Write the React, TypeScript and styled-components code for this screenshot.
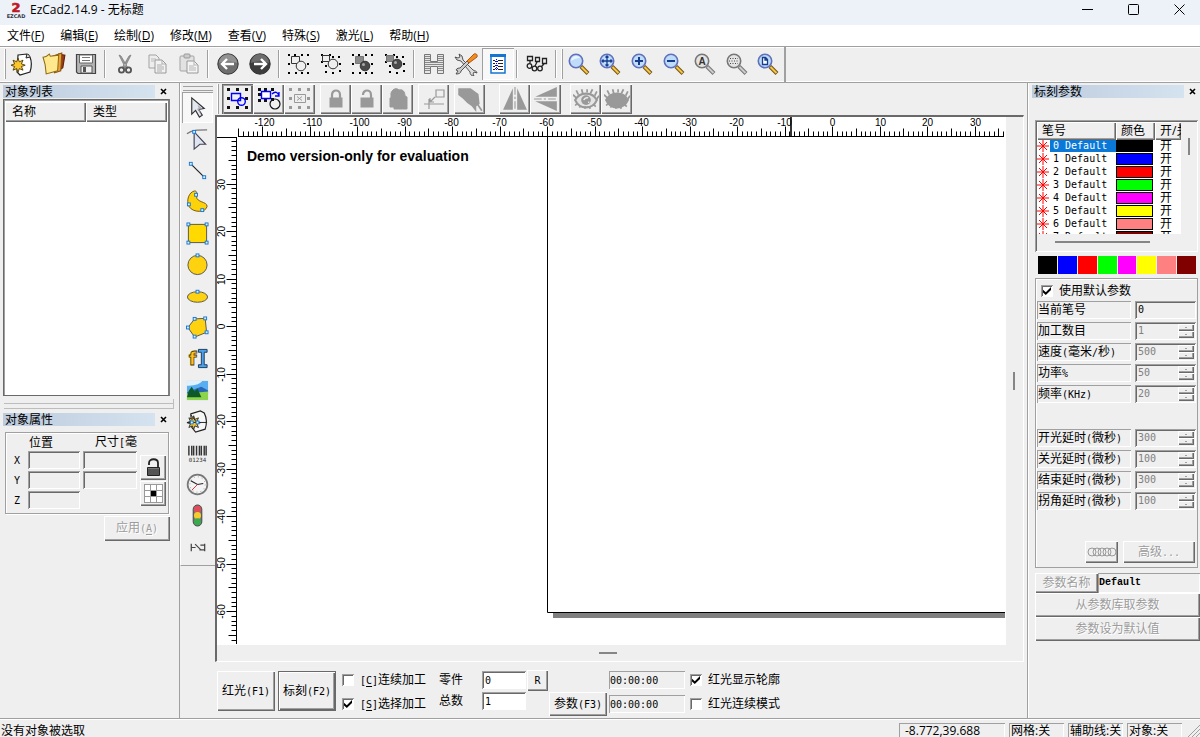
import React from "react";
import styled, { createGlobalStyle, css } from "styled-components";

const face = "#efefef";
const shade = "#a0a0a0";
const dark = "#696969";
const ui = `"Open Sans", "Noto Sans CJK SC", sans-serif`;
const song = `"DejaVu Sans Mono", "Noto Sans CJK SC", monospace`;

const raised = css`
  box-shadow: inset 1px 1px #fff, inset -1px -1px ${dark}, inset -2px -2px ${shade};
`;
const sunken = css`
  box-shadow: inset 1px 1px ${shade}, inset -1px -1px #fff;
`;
const deep = css`
  box-shadow: inset 1px 1px ${shade}, inset -1px -1px #fff, inset 2px 2px ${dark};
`;

const Global = createGlobalStyle`
  * { box-sizing: border-box; }
  body { margin: 0; background: ${face}; color: #000; font: 12px/14px ${ui}; }
  button, input { font: inherit; color: inherit; border: 0; margin: 0; padding: 0; background: none; border-radius: 0; }
  a { color: inherit; text-decoration: none; }
  svg { display: block; flex: none; }
  h1, h2 { margin: 0; font: inherit; }
  table { border-collapse: collapse; border-spacing: 0; }
  th { font-weight: normal; text-align: left; }
`;

const Window = styled.div`
  display: flex;
  flex-direction: column;
  height: 100vh;
  min-height: 720px;
  overflow: hidden;
`;

/* ---------- text ---------- */

const Half = styled.span`
  font-size: 10px;
`;
const Key = styled.u`
  text-underline-offset: 2px;
`;
const Cjk = styled.span<{ $off?: boolean }>`
  font: 12px/14px ${song};
  white-space: nowrap;
  ${(p) => p.$off && css`color: #9c9c9c; text-shadow: 1px 1px #fff;`}
`;

/* Full-width characters at 12px, half-width ones at exactly half that advance. */
function Label({ text, off }: { text: string; off?: boolean }) {
  const parts = text.split(/([\x20-\x7e]+)/).filter(Boolean);
  return (
    <Cjk $off={off}>
      {parts.map((part, i) => {
        if (!/^[\x20-\x7e]/.test(part)) return part;
        const m = part.match(/^([^&]*)&(.)(.*)$/);
        return <Half key={i}>{m ? <>{m[1]}<Key>{m[2]}</Key>{m[3]}</> : part}</Half>;
      })}
    </Cjk>
  );
}

/* ---------- title and menu ---------- */

const TitleBar = styled.header`
  display: flex;
  align-items: center;
  height: 25px;
  flex: none;
  padding: 0 0 6px 6px;
  background: #edf2f9;
`;
const Title = styled.h1`
  flex: 1;
  padding-left: 4px;
`;
const Caption = styled.button`
  display: flex;
  align-items: center;
  justify-content: center;
  width: 46px;
  height: 18px;
`;
const CaptionGroup = styled.div`
  display: flex;
  margin-right: -2px;
`;
const MenuBar = styled.nav`
  display: flex;
  gap: 16px;
  height: 21px;
  flex: none;
  padding: 4px 7px 0;
  background: #fff;
`;
const MenuItem = styled.a`
  white-space: nowrap;
`;

/* ---------- tool bars ---------- */

const Rebar = styled.div`
  display: flex;
  height: 37px;
  flex: none;
  padding-left: 4px;
  border-top: 1px solid ${shade};
  border-bottom: 1px solid ${shade};
  box-shadow: inset 0 1px #fff, inset 0 -1px #fff;
`;
const Band = styled.div`
  display: flex;
  align-items: center;
  padding: 0 0 2px;
`;
const ZoomBand = styled(Band)`
  width: 226px;
  padding-left: 1px;
  border-right: 2px solid ${shade};
`;
const Grip = styled.i`
  width: 2px;
  height: 30px;
  border-right: 1px solid ${shade};
  border-left: 1px solid #fff;
`;
const Divider = styled.i`
  width: 2px;
  height: 28px;
  margin: 0 3px 0 2px;
  border-left: 1px solid ${shade};
  border-right: 1px solid #fff;
`;
const Tool = styled.button<{ $on?: boolean }>`
  display: flex;
  align-items: center;
  justify-content: center;
  width: 32px;
  height: 32px;
  ${(p) => p.$on && css`background: #f8f8f8; ${sunken}`}
`;
const ZoomTool = styled(Tool)`
  flex: 1;
`;

const Body = styled.div`
  display: flex;
  flex: 1;
  min-height: 0;
`;

/* ---------- docked panels ---------- */

const LeftDock = styled.aside`
  display: flex;
  flex-direction: column;
  width: 180px;
  flex: none;
  padding-top: 1px;
  border-right: 1px solid ${shade};
`;
const PanelHead = styled.div`
  display: flex;
  align-items: center;
  height: 14px;
  margin: 0 0 0 3px;
`;
const PanelTitle = styled.h2`
  flex: 1;
  height: 13px;
  padding-left: 2px;
  line-height: 13px;
  background: linear-gradient(90deg, #bccbdd, #d5e2ef);
`;
const Close = styled.button`
  width: 16px;
  height: 14px;
  display: flex;
  align-items: center;
  justify-content: center;
`;
const Spacer = styled.i`
  width: 8px;
`;
const ListPane = styled.div`
  height: 297px;
  margin: 1px 9px 0 3px;
  padding: 2px 1px 2px;
  background: #fff;
  border: 1px solid ${dark};
  border-right: 2px solid #808080;
  box-shadow: inset 1px 1px ${shade};
`;
const HeadTable = styled.table`
  width: 100%;
  table-layout: fixed;
  background: ${face};
`;
const HeadCell = styled.th`
  height: 20px;
  padding: 0 0 0 7px;
  ${raised}
`;
const Splitter = styled.div`
  height: 10px;
  margin: 3px 5px 3px 4px;
  border: 1px solid #bdbdbd;
  border-width: 0 1px 1px 0;
  background: linear-gradient(#bdbdbd, #bdbdbd) 0 4px / 100% 1px no-repeat;
`;
const Group = styled.fieldset`
  display: grid;
  grid-template-columns: 19px 52px 52px 28px;
  column-gap: 3px;
  height: 82px;
  margin: 6px 10px 0 5px;
  padding: 3px 0 0;
  border: 1px solid ${shade};
  box-shadow: inset 1px 1px #fff, 1px 1px #fff;
`;
const AxisColumn = styled.div`
  display: grid;
  grid-template-rows: 13px 18px 18px 18px;
  row-gap: 2px;
  align-content: start;
  justify-items: center;
  align-items: center;
  padding-left: 3px;
`;
const FieldColumn = styled(AxisColumn)`
  justify-items: stretch;
  padding-left: 0;
`;
const FieldHead = styled.span<{ $pad: number }>`
  padding-left: ${(p) => p.$pad}px;
  white-space: nowrap;
`;
const ButtonColumn = styled.div`
  display: grid;
  grid-template-rows: 25px 25px;
  row-gap: 1px;
  padding: 19px 0 0 2px;
`;
const PosInput = styled.input`
  width: 100%;
  height: 18px;
  padding: 0 4px;
  ${deep}
`;
const Face = styled.button`
  display: flex;
  align-items: center;
  justify-content: center;
  background: ${face};
  white-space: nowrap;
  ${raised}
`;
const Apply = styled(Face)`
  width: 66px;
  height: 25px;
  margin: 2px 9px 0 auto;
`;

/* ---------- drawing tools ---------- */

const DrawDock = styled.div`
  display: flex;
  flex-direction: column;
  width: 35px;
  height: 483px;
  flex: none;
  padding: 3px 2px 2px 1px;
  border-left: 1px solid #fff;
  border-bottom: 1px solid ${shade};
`;
const HGrip = styled.i`
  height: 5px;
  border-top: 1px solid ${shade};
  border-bottom: 1px solid ${shade};
  margin: 0 0 1px 1px;
  flex: none;
`;
const DrawTool = styled(Tool)`
  width: 31px;
  height: auto;
  flex: 1;
`;

/* ---------- centre ---------- */

const Center = styled.main`
  display: flex;
  flex-direction: column;
  flex: 1;
  min-width: 0;
`;
const EditBar = styled.div`
  display: flex;
  align-items: center;
  height: 32px;
  flex: none;
  padding-left: 2px;
`;
const EditGroup = styled.div<{ $gap: number }>`
  display: flex;
  margin-left: ${(p) => p.$gap}px;
`;
const EditTool = styled(Face)<{ $on?: boolean }>`
  width: 31px;
  height: 30px;
  ${(p) => p.$on && css`box-shadow: inset 1px 1px ${dark}, inset 2px 2px ${shade}, inset -2px -2px ${dark};`}
`;
const Frame = styled.div`
  display: grid;
  grid-template-columns: 1fr 17px;
  grid-template-rows: 1fr 16px;
  flex: 1;
  min-height: 0;
  margin-right: 3px;
  border: 2px solid ${dark};
  border-right: 1px solid #fff;
  border-bottom: 1px solid #fff;
`;
const Sheet = styled.div`
  overflow: hidden;
  min-width: 0;
  min-height: 0;
  background: #fff;
`;
const VScroll = styled.div`
  display: flex;
  align-items: center;
  justify-content: center;
  padding-right: 2px;
  &::after { content: ""; width: 2px; height: 18px; background: #868686; }
`;
const HScroll = styled.div`
  display: flex;
  align-items: center;
  justify-content: center;
  padding-right: 8px;
  &::after { content: ""; width: 18px; height: 2px; background: #868686; }
`;

const MarkBar = styled.form`
  display: flex;
  height: 56px;
  flex: none;
  padding: 8px 0 0 2px;
`;
const BigButton = styled(Face)<{ $primary?: boolean }>`
  width: 58px;
  height: 40px;
  margin: 1px 3px 0 0;
  ${(p) => p.$primary && css`border: 1px solid ${dark};`}
`;
const Rows = styled.div<{ $w: number }>`
  display: grid;
  grid-template-rows: 20px 20px;
  row-gap: 4px;
  align-content: start;
  align-items: center;
  width: ${(p) => p.$w}px;
`;
const Inputs = styled(Rows)`
  row-gap: 1px;
`;
const CheckRows = styled(Rows)<{ $gap: number }>`
  margin-left: ${(p) => p.$gap}px;
`;
const Check = styled.label`
  display: flex;
  align-items: center;
  gap: 6px;
`;
const Box = styled.input`
  appearance: none;
  width: 12px;
  height: 12px;
  background: #fff;
  ${deep}
  &:checked::before {
    content: "";
    display: block;
    width: 8px;
    height: 8px;
    margin: 2px;
    background: #000;
    clip-path: polygon(0 35%, 35% 65%, 100% 0, 100% 38%, 35% 100%, 0 70%);
  }
`;
const TextBox = styled.input`
  width: 100%;
  height: 18px;
  padding: 0 3px;
  background: #fff;
  font: 10px/14px ${song};
  ${deep}
`;
const Reset = styled(Face)`
  width: 21px;
  height: 21px;
  margin-left: 1px;
`;
const ParamButton = styled(Face)`
  width: 58px;
  height: 24px;
  margin: 22px 2px 0 1px;
`;
const Clock = styled.output`
  height: 18px;
  padding: 2px 1px;
  ${sunken}
`;

/* ---------- parameter dock ---------- */

const RightDock = styled.aside`
  display: flex;
  flex-direction: column;
  width: 173px;
  flex: none;
  padding: 1px 0 0 7px;
  border-left: 1px solid ${shade};
  box-shadow: inset 1px 0 #fff;
`;
const RightHead = styled(PanelHead)`
  margin: 0 0 22px -3px;
`;
const PenFrame = styled.div`
  height: 132px;
  flex: none;
  margin-right: 2px;
  padding: 2px 0 0 2px;
  ${deep}
`;
const PenRow = styled.div`
  display: flex;
  gap: 7px;
`;
const PenClip = styled.div`
  width: 144px;
  height: 112px;
  overflow: hidden;
  background: #fff;
`;
const PenTable = styled.table`
  width: 144px;
  table-layout: fixed;
`;
const PenHead = styled.th`
  height: 18px;
  padding: 0 0 0 5px;
  overflow: hidden;
  background: ${face};
  white-space: nowrap;
  ${raised}
`;
const PenCell = styled.td`
  height: 13px;
  padding: 0 0 1px;
  line-height: 12px;
  overflow: hidden;
  white-space: nowrap;
  vertical-align: top;
`;
const OnCell = styled(PenCell)`
  padding-left: 5px;
`;
const PenName = styled.span<{ $sel?: boolean }>`
  display: block;
  height: 12px;
  padding-left: 3px;
  font: 10px/12px ${song};
  ${(p) => p.$sel && css`background: #0a78d7; color: #fff;`}
`;
const PenFlex = styled.div`
  display: grid;
  grid-template-columns: 13px 1fr;
  align-items: center;
  height: 12px;
`;
const PenColor = styled.div<{ $c: string }>`
  width: 37px;
  height: 12px;
  border: 1px solid #000;
  background: ${(p) => p.$c};
`;
const PenV = styled.i`
  width: 2px;
  height: 17px;
  margin-top: 16px;
  background: #868686;
`;
const PenH = styled.i`
  display: block;
  width: 95px;
  height: 2px;
  margin: 7px 0 0 18px;
  background: #868686;
`;
const Palette = styled.div`
  display: grid;
  grid-template-columns: repeat(8, 1fr);
  gap: 1px;
  margin: 4px 4px 4px 3px;
`;
const Swatch = styled.button<{ $c: string }>`
  height: 18px;
  background: ${(p) => p.$c};
`;
const Params = styled.fieldset`
  display: flex;
  flex-direction: column;
  min-width: 0;
  height: 290px;
  flex: none;
  margin: 0 2px 0 0;
  padding: 5px 1px 0;
  border: 1px solid ${shade};
  box-shadow: inset 1px 1px #fff;
`;
const ParamCheck = styled(Check)`
  padding-left: 4px;
  margin-bottom: 3px;
`;
const Param = styled.label<{ $gap?: boolean }>`
  display: flex;
  justify-content: space-between;
  height: 18px;
  margin: ${(p) => (p.$gap ? 23 : 0)}px 0 3px;
`;
const ParamName = styled.span`
  width: 94px;
  padding: 2px 1px;
  ${sunken}
`;
const ParamField = styled.span<{ $off?: boolean }>`
  display: flex;
  width: 61px;
  height: 18px;
  padding: 2px;
  color: ${(p) => (p.$off ? "#808080" : "#000")};
  ${deep}
`;
const ParamInput = styled.input`
  flex: 1;
  min-width: 0;
  padding-left: 1px;
  font: 10px/14px ${song};
`;
const Spin = styled.span`
  display: grid;
  grid-template-rows: 7px 7px;
  width: 16px;
`;
const Nub = styled.i`
  width: 2px;
  height: 1px;
  background: ${shade};
`;
const Advanced = styled.div`
  display: flex;
  justify-content: flex-end;
  gap: 5px;
  margin-top: 28px;
  padding-right: 1px;
`;
const AdvButton = styled(Face)<{ $w: number }>`
  width: ${(p) => p.$w}px;
  height: 22px;
`;
const NameRow = styled.div`
  display: flex;
  height: 20px;
  margin-top: 5px;
`;
const NameButton = styled(Face)`
  width: 63px;
`;
const NameBox = styled.output`
  flex: 1;
  padding: 3px 1px;
  font: bold 10px/14px "Liberation Mono", monospace;
  ${sunken}
`;
const WideButton = styled(Face)`
  height: 24px;
  flex: none;
`;

/* ---------- status bar ---------- */

const StatusBar = styled.footer`
  display: flex;
  height: 19px;
  flex: none;
  gap: 4px;
  padding: 4px 0 0 1px;
  border-top: 1px solid ${shade};
  box-shadow: inset 0 1px #fff;
  overflow: hidden;
`;
const Message = styled.span`
  flex: 1;
  padding-top: 1px;
`;
const Pane = styled.span<{ $w: number }>`
  width: ${(p) => p.$w}px;
  height: 18px;
  padding: 1px 0 0 2px;
  white-space: nowrap;
  ${sunken}
`;
const Coord = styled(Pane)`
  padding-left: 6px;
`;

/* ---------- icons ---------- */

const Svg = ({ s = 24, children }: { s?: number; children: React.ReactNode }) => (
  <svg width={s} height={s} viewBox="0 0 24 24" fill="none" aria-hidden="true">{children}</svg>
);

const star = "M8 6l1.3 3.8 3.7-1.6-1.6 3.7 3.8 1.3-3.8 1.3 1.6 3.7-3.7-1.6L8 20.4l-1.3-3.8L3 18.2l1.6-3.7L1 13.2l3.6-1.3L3 8.2l3.7 1.6z";

const dots = (pts: number[][], c = "#000") =>
  pts.map(([x, y]) => <rect key={`${x}-${y}`} x={x} y={y} width="2" height="2" fill={c} />);
const ring = [[1, 2], [7, 2], [14, 2], [20, 2], [1, 11], [20, 11], [1, 20], [8, 20], [14, 20], [20, 20]];

const NewIcon = () => (
  <Svg>
    <path d="M8 3l9-1c1 0 2 1 3 3 2 5 2 9 0 15l-10 3-3-3z" fill="#fff" stroke="#222" strokeWidth="1.2" />
    <path d="M17 2l-1 4 4-1" fill="#ddd" stroke="#222" />
    <path d={star} fill="#f9c62b" stroke="#513a05" strokeWidth=".9" />
  </Svg>
);
const OpenIcon = () => (
  <Svg s={25}>
    <path d="M16 3l6 1-2 12-4 3z" fill="#9d3a16" stroke="#5d2208" />
    <path d="M10 5l9-3-1 17-6 2z" fill="#f0a33b" stroke="#8a5510" />
    <path d="M1 6c2 0 4-1 6-3l1 2 8-1-1 15-11 3-1-9z" fill="#ffe88d" stroke="#8f6a12" />
  </Svg>
);
const SaveIcon = () => (
  <Svg>
    <path d="M2.500 2.500h19v19H4l-1.500-1.500z" fill="#b4b4b4" stroke="#444" strokeWidth="1.2" />
    <path d="M5.500 3h13v8h-13z" fill="#fff" stroke="#666" />
    <path d="M8 5.500h8M8 8.500h8" stroke="#777" />
    <path d="M7 14h11v7H7z" fill="#f1f1f1" stroke="#555" />
    <path d="M9 15h3v5H9z" fill="#555" />
  </Svg>
);
const CutIcon = () => (
  <Svg>
    <path d="M6 3l2 1 7 12-2 1zM18 3l-2 1-7 12 2 1z" fill="#999" stroke="#777" strokeWidth=".7" />
    <circle cx="8.500" cy="18" r="2.600" stroke="#555" strokeWidth="1.800" />
    <circle cx="15.500" cy="18" r="2.600" stroke="#555" strokeWidth="1.800" />
  </Svg>
);
const CopyIcon = () => (
  <Svg>
    <path d="M4 3h7l3 3v10H4z" fill="#ededed" stroke="#a3a3a3" />
    <path d="M6 7h5M6 9h3" stroke="#bbb" />
    <path d="M10 8h7l4 4v9H10z" fill="#f2f2f2" stroke="#999" />
    <path d="M17 8v4h4M12 13h5M12 15h7M12 17h7M12 19h5" stroke="#adadad" />
  </Svg>
);
const PasteIcon = () => (
  <Svg>
    <rect x="3" y="4" width="14" height="15" rx="1" fill="#e2e2e2" stroke="#a3a3a3" />
    <rect x="7" y="2" width="6" height="4" rx="1" fill="#ccc" stroke="#999" />
    <path d="M10 9h7l4 4v8H10z" fill="#f4f4f4" stroke="#999" />
    <path d="M17 9v4h4M12 14h5M12 16h7M12 18h7" stroke="#b5b5b5" />
  </Svg>
);
const ArrowDisc = ({ back }: { back?: boolean }) => (
  <Svg>
    <circle cx="12" cy="12" r="10.200" fill={back ? "#6e6e6e" : "#3d3d3d"} stroke="#333" />
    <path d="M3 11a9 9 0 0118 0c-5-2-13-2-18 0z" fill="#fff" opacity=".25" />
    <path d={back ? "M18 12H7M11 7l-5 5 5 5" : "M6 12h11M13 7l5 5-5 5"} stroke="#fff" strokeWidth="2.400" />
  </Svg>
);
const GroupIcon = ({ fill, tight }: { fill?: boolean; tight?: boolean }) => (
  <Svg>
    {tight
      ? dots([[2, 2], [10, 2], [2, 9], [13, 4], [19, 4], [20, 11], [6, 13], [20, 18], [6, 19], [13, 20]])
      : dots(ring)}
    <path d={tight ? "M3.500 3.500h7v6h-7z" : "M4.500 4.500h8v7h-8z"} fill={fill ? "#8a8a8a" : "#efefef"} stroke={fill ? "#777" : "#333"} />
    <circle cx="14" cy={tight ? 12 : 14} r="4.800" fill={fill ? "#4a4a4a" : "#efefef"} stroke="#333" />
    {fill && <circle cx="12.500" cy={tight ? 10.5 : 12.5} r="1.500" fill="#aaa" />}
  </Svg>
);
const HatchIcon = () => (
  <Svg>
    <path d="M2.500 2.500h6v7h7v-7h6v19h-6v-7h-7v7h-6z" fill="#e6e6e6" stroke="#777" />
    <path d="M3 4.500h5M3 6.500h5M3 8.500h5M3 10.500h18M3 12.500h18M3 14.500h5M3 16.500h5M3 18.500h5M16 4.500h5M16 6.500h5M16 8.500h5M16 14.500h5M16 16.500h5M16 18.500h5" stroke="#888" />
  </Svg>
);
const ToolsIcon = () => (
  <Svg>
    <path d="M5 2l3 2 1 4 10 10c2 1 4 1 4 3l-3-1-1 2 1 2c-3 0-4-2-4-4L7 9 3 8 1 5l3 1 2-1z" fill="#ddd" stroke="#444" strokeWidth=".9" />
    <path d="M13 9l2 2-8 8c0 2-2 3-5 3l2-3-2-1c1-2 3-2 4-2z" fill="#ccc" stroke="#444" strokeWidth=".9" />
    <path d="M13 9l7-7c2-1 4 1 3 3l-8 6z" fill="#f58a1f" stroke="#a34e06" strokeWidth=".9" />
  </Svg>
);
const ListIcon = () => (
  <Svg>
    <rect x="5" y="3" width="14" height="18" fill="#fff" stroke="#1673cf" strokeWidth="1.500" />
    <path d="M4 2h16v3H4z" fill="#1673cf" />
    <path d="M7 8.500h2M7 11.500h2M7 14.500h2M7 17.500h2M12 8.500h5M12 11.500h5M12 14.500h5M12 17.500h5" stroke="#222" />
    <path d="M10.500 7v12M9 9.500h3M9 13.500h3M9 16.500h3" stroke="#00f" strokeDasharray="1 1" />
  </Svg>
);
const ChainIcon = () => (
  <Svg>
    <g stroke="#222" strokeWidth="1.300">
      <path d="M2.500 4.500h5v4h-5zM10.500 5.500h4v4h-4zM17.500 6.500h4v5h-4zM5 9v2M12 10l-2 4M19 12l-3 3" />
      <circle cx="4.500" cy="14" r="2.300" /><circle cx="9.500" cy="16.500" r="2.300" /><circle cx="15" cy="16.500" r="2.300" />
    </g>
  </Svg>
);
const Lens = ({ kind }: { kind: string }) => {
  const gray = kind === "A" || kind === "dots";
  const ink = gray ? "#444" : "#163c8c";
  return (
    <Svg>
      <path d="M14 14.500l7 7" stroke={gray ? "#777" : "#77531a"} strokeWidth="4" />
      <path d="M14.500 15l6 6" stroke={gray ? "#ccc" : "#f5c842"} strokeWidth="2" />
      <circle cx="9" cy="9" r="6.700" fill={gray ? "#e4e4e4" : "#bfdcfb"} stroke={gray ? "#777" : "#5f70bd"} strokeWidth="1.600" />
      {kind === "" && <path d="M4 9a5 5 0 015-5c3 0 4 1 4 2-3 0-6 1-9 3z" fill="#fff" opacity=".7" />}
      {kind === "+" && <path d="M9 5v8M5 9h8" stroke={ink} strokeWidth="2" />}
      {kind === "-" && <path d="M5 9h8" stroke={ink} strokeWidth="2" />}
      {kind === "move" && <path d="M9 4v10M4 9h10M7.500 5.500L9 4l1.500 1.500M7.500 12.500L9 14l1.500-1.500M5.500 7.500L4 9l1.500 1.500M12.500 7.500L14 9l-1.500 1.500" stroke={ink} strokeWidth="1.300" />}
      {kind === "dots" && <path d="M5 6.500h8M4 9h10M5 11.500h8" stroke="#444" strokeDasharray="1 1.500" />}
      {kind === "page" && <path d="M6.500 5.500h3l2 2v5h-5zM9 5.500v2.500h2.500" fill="#fff" stroke={ink} strokeWidth="1.300" />}
      {kind === "A" && <text x="9" y="12.500" textAnchor="middle" fontSize="10" fontWeight="bold" fontFamily="Liberation Sans" fill="#333">A</text>}
    </Svg>
  );
};

const pins = (pts: number[][], c: string) =>
  pts.map(([x, y]) => <rect key={`${x}-${y}`} x={x - 1} y={y - 1} width="3" height="3" fill={c} />);
const nine = [[2, 2], [11, 2], [20, 2], [2, 11], [20, 11], [2, 20], [11, 20], [20, 20]];
const SelectIcon = () => (
  <Svg>
    {pins(nine, "#111")}
    <path d="M5.500 6.500h9v7h-9z" stroke="#00f" strokeWidth="1.400" /><circle cx="15.500" cy="14.500" r="3.800" stroke="#00f" strokeWidth="1.400" />
  </Svg>
);
const RotateIcon = () => (
  <Svg>
    {pins([[2, 2], [8, 2], [15, 2], [2, 7], [2, 13], [8, 13], [15, 12]], "#111")}
    <path d="M4.500 4.500h9v7h-9z" fill="#fff" stroke="#00f" strokeWidth="1.400" />
    <circle cx="18" cy="17" r="5" stroke="#111" strokeWidth="1.200" />
    <path d="M15 7c3-3 6-2 7 2M22 5v4h-4" stroke="#00f" strokeWidth="1.300" />
  </Svg>
);
const ArrayIcon = () => (
  <Svg>
    {pins(nine, "#999")}
    <path d="M6.500 7.500h11v8h-11zM9 9.500l5 4M14 9.500l-5 4" stroke="#999" />
  </Svg>
);
const LockIcon = ({ kind }: { kind: number }) => (
  <Svg>
    {kind < 2 ? (
      <>
        <rect x="5.500" y="10.500" width="13" height="10" fill="#999" />
        <path d={kind ? "M8 8c0-6 8-6 8 0v3" : "M8 11V8c0-6 8-6 8 0v3"} stroke="#999" strokeWidth="2.200" />
      </>
    ) : (
      <path d="M4 11h1V6c2-5 6-5 8-3 4-1 6 2 6 6l2 1v12H8v-2H4z" fill="#999" stroke="#999" />
    )}
  </Svg>
);
const OriginIcon = () => (
  <Svg>
    <path d="M2 17h20M7 12v10M14 3h8v7h-8zM13 10l-5 5M8 11v4h4" stroke="#999" strokeWidth="1.200" />
  </Svg>
);
const HandIcon = () => (
  <Svg s={27}>
    <path d="M2 2h11l7 5 1 9-3 2v5l-4-5-4-3-4-4-4-3z" fill="#999" /><path d="M17 13l6 9" stroke="#999" strokeWidth="1.500" />
  </Svg>
);
const MirrorIcon = ({ v }: { v?: boolean }) => (
  <Svg s={26}>
    <g transform={v ? "rotate(-90 12 12)" : undefined}>
      <path d="M10 2v20H1zM14 2v20h9z" fill="#999" /><path d="M12 1v22" stroke="#999" strokeDasharray="7 2 2 2" />
    </g>
  </Svg>
);
const EyeIcon = ({ shut }: { shut?: boolean }) => (
  <Svg s={26}>
    <path d="M2 13c4-8 16-8 20 0-4 9-16 9-20 0z" fill={shut ? "#999" : "#e4e4e4"} stroke="#999" strokeWidth="2" />
    <path d="M3 11L0 8M5 8L3 4M9 7L8 3M13 6V3M16 7l2-4M20 9l2-4M22 12l2-3M4 16l-2 2M7 18l-1 2M11 19v2M15 19l1 2M19 17l2 2" stroke="#999" strokeWidth="1.600" />
    {!shut && <><circle cx="12" cy="13" r="4.500" fill="#999" /><path d="M10 13a3 3 0 014-2M14 15h1" stroke="#eee" strokeWidth="1.300" /></>}
  </Svg>
);

const node = (x: number, y: number) => <rect key={`${x},${y}`} x={x - 1.5} y={y - 1.5} width="3" height="3" fill="#dff0ff" stroke="#1878d0" />;

const drawIcons: [string, React.ReactNode][] = [
  ["选择", <><path d="M6 2l13 11-6 1 4 6-3 2-4-7-4 4z" fill="#e4e8ef" stroke="#333" strokeWidth="1.200" /><path d="M12 9l5 4-5 0 4 7" fill="#aab" /></>],
  ["节点", <><path d="M1 6c5-4 12-4 21-4" stroke="#777" strokeWidth="1.300" /><path d="M8.500 4l12 13-6 0-6 5z" fill="#dfe5f2" stroke="#445" strokeWidth="1.200" />{node(8.5, 4)}</>],
  ["直线", <><path d="M5 5l14 14" stroke="#222" strokeWidth="1.200" />{node(5, 5)}{node(19, 19)}</>],
  ["曲线", <><path d="M9 1C3 2 0 11 3 17c4 7 18 7 19 0 0-5-11-4-11-10 0-3 1-6-2-6z" fill="#fcd20a" stroke="#7a5510" />{node(10.5, 5)}{node(3, 15)}{node(17, 21)}</>],
  ["矩形", <><path d="M2.500 2.500h19v19h-19z" fill="#ffd900" stroke="#555" />{[[2.5, 2.5], [21.5, 2.5], [2.5, 21.5], [21.5, 21.5]].map(([x, y]) => node(x, y))}</>],
  ["圆", <><circle cx="12" cy="12.500" r="10" fill="#ffd20f" stroke="#555" />{node(12, 2.5)}</>],
  ["椭圆", <><ellipse cx="12" cy="12.500" rx="10.500" ry="5.500" fill="#ffd20f" stroke="#555" />{node(12, 7)}</>],
  ["多边形", <><path d="M9 3l11-.5 1.500 14.500L9 22 2 12z" fill="#ffd20f" stroke="#555" />{[[9, 3], [20, 2.5], [21.5, 17], [9, 21.5], [2, 12]].map(([x, y]) => node(x, y))}</>],
  ["文字", <><text x="7" y="19" textAnchor="middle" fontSize="19" fontWeight="bold" fontFamily="DejaVu Sans" fill="#fcc419" stroke="#4d3a0a" strokeWidth=".8">f</text><path d="M13 2.500h9v3h-3v13h3v3h-9v-3h3v-13h-3z" fill="#4aa3ea" stroke="#1b3a5c" /></>],
  ["位图", <><path d="M1 2h22v20H1z" fill="#58aef0" /><path d="M1 2h16c-3 4-10 5-16 5z" fill="#dff1ff" /><path d="M1 14l10-4 5-2 7 4v4H1z" fill="#2765b5" /><path d="M1 15l22-2v9H1z" fill="#8cd44a" /><path d="M1 19l2-7 3-4 3 5 3-3 4 9z" fill="#0d5a28" /></>],
  ["矢量文件", <><path d="M5 4l10-3 4 2c3 6 3 11 1 17l-10 3-4-5z" fill="#f6f6f6" stroke="#222" strokeWidth="1.200" /><path d={star} fill="#f9c62b" stroke="#333" /><path d="M1 13h21M5 5l7 9" stroke="#222" />{node(6, 13)}{node(12, 13)}</>],
  ["条码", <><path d="M3 4v10M6 4v10M8 4v10M11 4v10M14 4v10M16 4v10M19 4v10M21 4v10" stroke="#333" strokeWidth="1.500" /><text x="12" y="21" textAnchor="middle" fontSize="6" fontFamily="DejaVu Sans Mono" fill="#333">01234</text></>],
  ["延时", <><circle cx="12" cy="12" r="10.300" fill="#f4f4f4" stroke="#777" strokeWidth="1.800" /><circle cx="12" cy="12" r="8" stroke="#999" strokeDasharray="1 3.200" /><path d="M5 8l7 4 6-1" stroke="#222" strokeWidth="1.200" /><path d="M12 12l-6 6" stroke="#d33" /></>],
  ["输入输出", <><rect x="7.500" y="1" width="9" height="22" rx="4.500" fill="#777" stroke="#444" /><circle cx="12" cy="5.500" r="3.700" fill="#e14b5a" /><circle cx="12" cy="12" r="3.700" fill="#f7cb2d" /><circle cx="12" cy="18.500" r="3.700" fill="#37ab4d" /></>],
  ["距离", <path d="M5.500 8v8M19.500 8v8M5 12h5M9.500 8.500l6 6M14 14.500h5M15 9.500h4" stroke="#444" strokeWidth="1.300" />],
];

/* ---------- drawing sheet with rulers ---------- */

const UNIT = 4.75;
const range = (a: number, b: number) => Array.from({ length: b - a + 1 }, (_, i) => a + i);
const tick = (u: number) => (u % 10 === 0 ? 10 : u % 5 === 0 ? 8 : 5);
const nudge = (n: number) => (n <= -10 ? 2 : n < 0 ? -1 : 0);

function Drawing() {
  const px = (u: number) => Math.round(615 + u * UNIT) + 0.5;
  const py = (u: number) => Math.round(209 - u * UNIT) + 0.5;
  return (
    <svg width="788" height="528" viewBox="0 0 788 528" fontFamily="Liberation Sans" fontSize="10">
      <g stroke="#000">
        {range(-125, 36).map((u) => <path key={u} d={`M${px(u)} 19.500v${-tick(u)}`} />)}
        {range(-66, 39).map((u) => <path key={u} d={`M19.500 ${py(u)}h${-tick(u)}`} />)}
        <path d="M21 19.500H787M19.500 20V527" />
        <path d="M0 20.500h19" />
        <path d="M574 0v19" strokeWidth="2" stroke="#333" />
        <path d="M330.500 20V495.500H788" fill="none" />
      </g>
      <path d="M336 496h452v5H336z" fill="#808080" />
      <g textAnchor="middle">
        {range(-12, 3).map((n) => <text key={n} x={px(n * 10) + nudge(n)} y="9">{n * 10}</text>)}
        {range(-6, 3).map((n) => (
          <text key={n} transform={`translate(8 ${py(n * 10)}) rotate(-90)`}>{n * 10}</text>
        ))}
      </g>
      <text x="30" y="44" fontSize="14" fontWeight="bold">Demo version-only for evaluation</text>
    </svg>
  );
}

/* ---------- data ---------- */

const menus = [["文件", "F"], ["编辑", "E"], ["绘制", "D"], ["修改", "M"], ["查看", "V"], ["特殊", "S"], ["激光", "L"], ["帮助", "H"]];
const colors = ["#000", "#00f", "#f00", "#0f0", "#f0f", "#ff0", "#ff8080", "#800000"];
const params: { name: string; value: string; gap?: boolean }[] = [
  { name: "当前笔号", value: "0" },
  { name: "加工数目", value: "1" },
  { name: "速度(毫米/秒)", value: "500" },
  { name: "功率%", value: "50" },
  { name: "频率(KHz)", value: "20" },
  { name: "开光延时(微秒)", value: "300", gap: true },
  { name: "关光延时(微秒)", value: "100" },
  { name: "结束延时(微秒)", value: "300" },
  { name: "拐角延时(微秒)", value: "100" },
];

const CloseX = () => <svg width="7" height="7" viewBox="0 0 7 7"><path d="M1 1l5 5M6 1L1 6" stroke="#000" strokeWidth="1.600" /></svg>;
const Burst = () => (
  <svg width="12" height="12" viewBox="0 0 12 12"><path d="M6 0v12M0 6h12M2 2l8 8M10 2l-8 8" stroke="#f00" /></svg>
);

function Toolbars() {
  return (
    <Rebar>
      <Band>
        <Grip />
        <Tool aria-label="新建"><NewIcon /></Tool>
        <Tool aria-label="打开"><OpenIcon /></Tool>
        <Tool aria-label="保存"><SaveIcon /></Tool>
        <Divider />
        <Tool aria-label="剪切"><CutIcon /></Tool>
        <Tool aria-label="复制"><CopyIcon /></Tool>
        <Tool aria-label="粘贴"><PasteIcon /></Tool>
        <Divider />
        <Tool aria-label="撤消"><ArrowDisc back /></Tool>
        <Tool aria-label="恢复"><ArrowDisc /></Tool>
        <Divider />
        <Tool aria-label="组合"><GroupIcon /></Tool>
        <Tool aria-label="分离组合"><GroupIcon tight /></Tool>
        <Tool aria-label="群组"><GroupIcon fill /></Tool>
        <Tool aria-label="分离群组"><GroupIcon fill tight /></Tool>
        <Divider />
        <Tool aria-label="填充"><HatchIcon /></Tool>
        <Tool aria-label="系统参数"><ToolsIcon /></Tool>
        <Tool aria-label="对象列表" $on><ListIcon /></Tool>
        <Divider />
        <Tool aria-label="节点"><ChainIcon /></Tool>
        <Divider />
      </Band>
      <ZoomBand>
        <Grip />
        {["", "move", "+", "-", "A", "dots", "page"].map((k) => (
          <ZoomTool key={k} aria-label={`缩放 ${k}`}><Lens kind={k} /></ZoomTool>
        ))}
      </ZoomBand>
    </Rebar>
  );
}

function LeftPanels() {
  return (
    <LeftDock>
      <PanelHead><PanelTitle>对象列表</PanelTitle><Close aria-label="关闭对象列表"><CloseX /></Close><Spacer /></PanelHead>
      <ListPane>
        <HeadTable><thead><tr><HeadCell>名称</HeadCell><HeadCell>类型</HeadCell></tr></thead></HeadTable>
      </ListPane>
      <Splitter />
      <PanelHead><PanelTitle>对象属性</PanelTitle><Close aria-label="关闭对象属性"><CloseX /></Close><Spacer /></PanelHead>
      <Group>
        <AxisColumn><span /><Label text="X" /><Label text="Y" /><Label text="Z" /></AxisColumn>
        <FieldColumn>
          <FieldHead $pad={1}><Label text="位置" /></FieldHead>
          <PosInput aria-label="X 位置" disabled /><PosInput aria-label="Y 位置" disabled /><PosInput aria-label="Z 位置" disabled />
        </FieldColumn>
        <FieldColumn>
          <FieldHead $pad={12}><Label text="尺寸[毫" /></FieldHead>
          <PosInput aria-label="X 尺寸" disabled /><PosInput aria-label="Y 尺寸" disabled />
        </FieldColumn>
        <ButtonColumn>
          <Face type="button" aria-label="锁定比例">
            <svg width="17" height="19" viewBox="0 0 17 19"><path d="M4 7V5c0-5 9-5 9 0v5" fill="none" stroke="#222" strokeWidth="1.800" /><path d="M2.500 9.500h12v8h-12z" fill="#777" stroke="#222" /><path d="M3 12h11M3 14h11M3 16h11" stroke="#333" /></svg>
          </Face>
          <Face type="button" aria-label="参考点">
            <svg width="19" height="19" viewBox="0 0 19 19"><path d="M0 0h19v19H0z" fill="#fff" /><path d="M0 .500h19M0 6.500h19M0 12.500h19M.500 0v19M6.500 0v19M12.500 0v19M18.500 0v19M0 18.500h19" stroke="#999" /><path d="M7 7h5v5H7z" fill="#000" /></svg>
          </Face>
        </ButtonColumn>
      </Group>
      <Apply type="button"><Label off text="应用(&A)" /></Apply>
    </LeftDock>
  );
}

function EditTools() {
  const groups: [number, React.ReactNode[]][] = [
    [3, [<SelectIcon />, <RotateIcon />, <ArrayIcon />]],
    [5, [<LockIcon kind={0} />, <LockIcon kind={1} />, <LockIcon kind={2} />]],
    [5, [<OriginIcon />]],
    [5, [<HandIcon />]],
    [14, [<MirrorIcon />, <MirrorIcon v />]],
    [9, [<EyeIcon />, <EyeIcon shut />]],
  ];
  return (
    <EditBar>
      <Grip />
      {groups.map(([gap, icons], g) => (
        <EditGroup key={g} $gap={gap}>
          {icons.map((icon, i) => <EditTool key={i} $on={g === 0 && i === 0} aria-label={`编辑工具 ${g + 1}-${i + 1}`}>{icon}</EditTool>)}
        </EditGroup>
      ))}
    </EditBar>
  );
}

function MarkPanel() {
  return (
    <MarkBar>
      <BigButton type="button"><Label text="红光(F1)" /></BigButton>
      <BigButton type="button" $primary><Label text="标刻(F2)" /></BigButton>
      <CheckRows $w={97} $gap={3}>
        <Check><Box type="checkbox" /><Label text="[&C]连续加工" /></Check>
        <Check><Box type="checkbox" defaultChecked /><Label text="[&S]选择加工" /></Check>
      </CheckRows>
      <Inputs $w={43}><label htmlFor="parts"><Label text="零件" /></label><label htmlFor="total"><Label text="总数" /></label></Inputs>
      <Inputs $w={44}><TextBox id="parts" defaultValue="0" /><TextBox id="total" defaultValue="1" /></Inputs>
      <Reset type="button"><Label text="R" /></Reset>
      <ParamButton type="button"><Label text="参数(F3)" /></ParamButton>
      <Rows $w={76}><Clock><Label text="00:00:00" /></Clock><Clock><Label text="00:00:00" /></Clock></Rows>
      <CheckRows $w={100} $gap={5}>
        <Check><Box type="checkbox" defaultChecked /><Label text="红光显示轮廓" /></Check>
        <Check><Box type="checkbox" /><Label text="红光连续模式" /></Check>
      </CheckRows>
    </MarkBar>
  );
}

function ParamPanel() {
  return (
    <RightDock>
      <RightHead><PanelTitle>标刻参数</PanelTitle><Close aria-label="关闭标刻参数"><CloseX /></Close></RightHead>
      <PenFrame>
        <PenRow>
          <PenClip>
            <PenTable>
              <colgroup><col width="79" /><col width="39" /><col width="26" /></colgroup>
              <thead><tr><PenHead>笔号</PenHead><PenHead>颜色</PenHead><PenHead>开/关</PenHead></tr></thead>
              <tbody>
                {colors.map((c, i) => (
                  <tr key={c}>
                    <PenCell><PenFlex><Burst /><PenName $sel={i === 0}>{i} Default</PenName></PenFlex></PenCell>
                    <PenCell><PenColor $c={c} /></PenCell>
                    <OnCell>开</OnCell>
                  </tr>
                ))}
              </tbody>
            </PenTable>
          </PenClip>
          <PenV />
        </PenRow>
        <PenH />
      </PenFrame>
      <Palette>{colors.map((c, i) => <Swatch key={c} $c={c} aria-label={`颜色 ${i}`} />)}</Palette>
      <Params>
        <ParamCheck><Box type="checkbox" defaultChecked /><Label text="使用默认参数" /></ParamCheck>
        {params.map((p, i) => (
          <Param key={p.name} $gap={p.gap}>
            <ParamName><Label text={p.name} /></ParamName>
            <ParamField $off={i > 0}>
              <ParamInput defaultValue={p.value} disabled={i > 0} />
              {i > 0 && <Spin><Face type="button" disabled aria-label="增加"><Nub /></Face><Face type="button" disabled aria-label="减少"><Nub /></Face></Spin>}
            </ParamField>
          </Param>
        ))}
        <Advanced>
          <AdvButton type="button" $w={33} aria-label="摆动">
            <svg width="30" height="12" viewBox="0 0 30 12" fill="none" stroke="#999">{[5, 10, 15, 20, 25].map((x) => <circle key={x} cx={x} cy="6" r="4" />)}</svg>
          </AdvButton>
          <AdvButton type="button" $w={72}><Label off text="高级..." /></AdvButton>
        </Advanced>
      </Params>
      <NameRow><NameButton type="button"><Label off text="参数名称" /></NameButton><NameBox>Default</NameBox></NameRow>
      <WideButton type="button"><Label off text="从参数库取参数" /></WideButton>
      <WideButton type="button"><Label off text="参数设为默认值" /></WideButton>
    </RightDock>
  );
}

export default function App() {
  return (
    <Window>
      <Global />
      <TitleBar>
        <svg width="20" height="19" viewBox="0 0 20 19" aria-hidden="true">
          <text x="10" y="12" textAnchor="middle" fontSize="13" fontWeight="bold" fontFamily="DejaVu Sans" fill="#c01822" stroke="#c01822" strokeWidth=".6">2</text>
          <text x="10" y="18" textAnchor="middle" fontSize="5" fontWeight="bold" fontFamily="DejaVu Sans" fill="#334">EZCAD</text>
        </svg>
        <Title>EzCad2.14.9 - 无标题</Title>
        <CaptionGroup>
          <Caption aria-label="最小化"><svg width="11" height="11"><path d="M0 5.500h11" stroke="#000" /></svg></Caption>
          <Caption aria-label="最大化"><svg width="11" height="11"><rect x=".500" y=".500" width="10" height="10" rx="1" fill="none" stroke="#000" /></svg></Caption>
          <Caption aria-label="关闭"><svg width="11" height="11"><path d="M.500.500l10 10M10.500.500l-10 10" stroke="#000" /></svg></Caption>
        </CaptionGroup>
      </TitleBar>
      <MenuBar>{menus.map(([t, k]) => <MenuItem key={k} href="#">{t}(<u>{k}</u>)</MenuItem>)}</MenuBar>
      <Toolbars />
      <Body>
        <LeftPanels />
        <DrawDock>
          <HGrip />
          {drawIcons.map(([name, icon], i) => <DrawTool key={name} aria-label={name} $on={i === 0}><Svg s={23}>{icon}</Svg></DrawTool>)}
        </DrawDock>
        <Center>
          <EditTools />
          <Frame><Sheet><Drawing /></Sheet><VScroll /><HScroll /></Frame>
          <MarkPanel />
        </Center>
        <ParamPanel />
      </Body>
      <StatusBar>
        <Message>没有对象被选取</Message>
        <Coord $w={106}>-8.772,39.688</Coord>
        <Pane $w={55}>网格:关</Pane>
        <Pane $w={55}>辅助线:关</Pane>
        <Pane $w={55}>对象:关</Pane>
        <svg width="14" height="14" viewBox="0 0 14 14"><path d="M2 14L14 2M6 14l8-8M10 14l4-4" stroke={shade} /></svg>
      </StatusBar>
    </Window>
  );
}
